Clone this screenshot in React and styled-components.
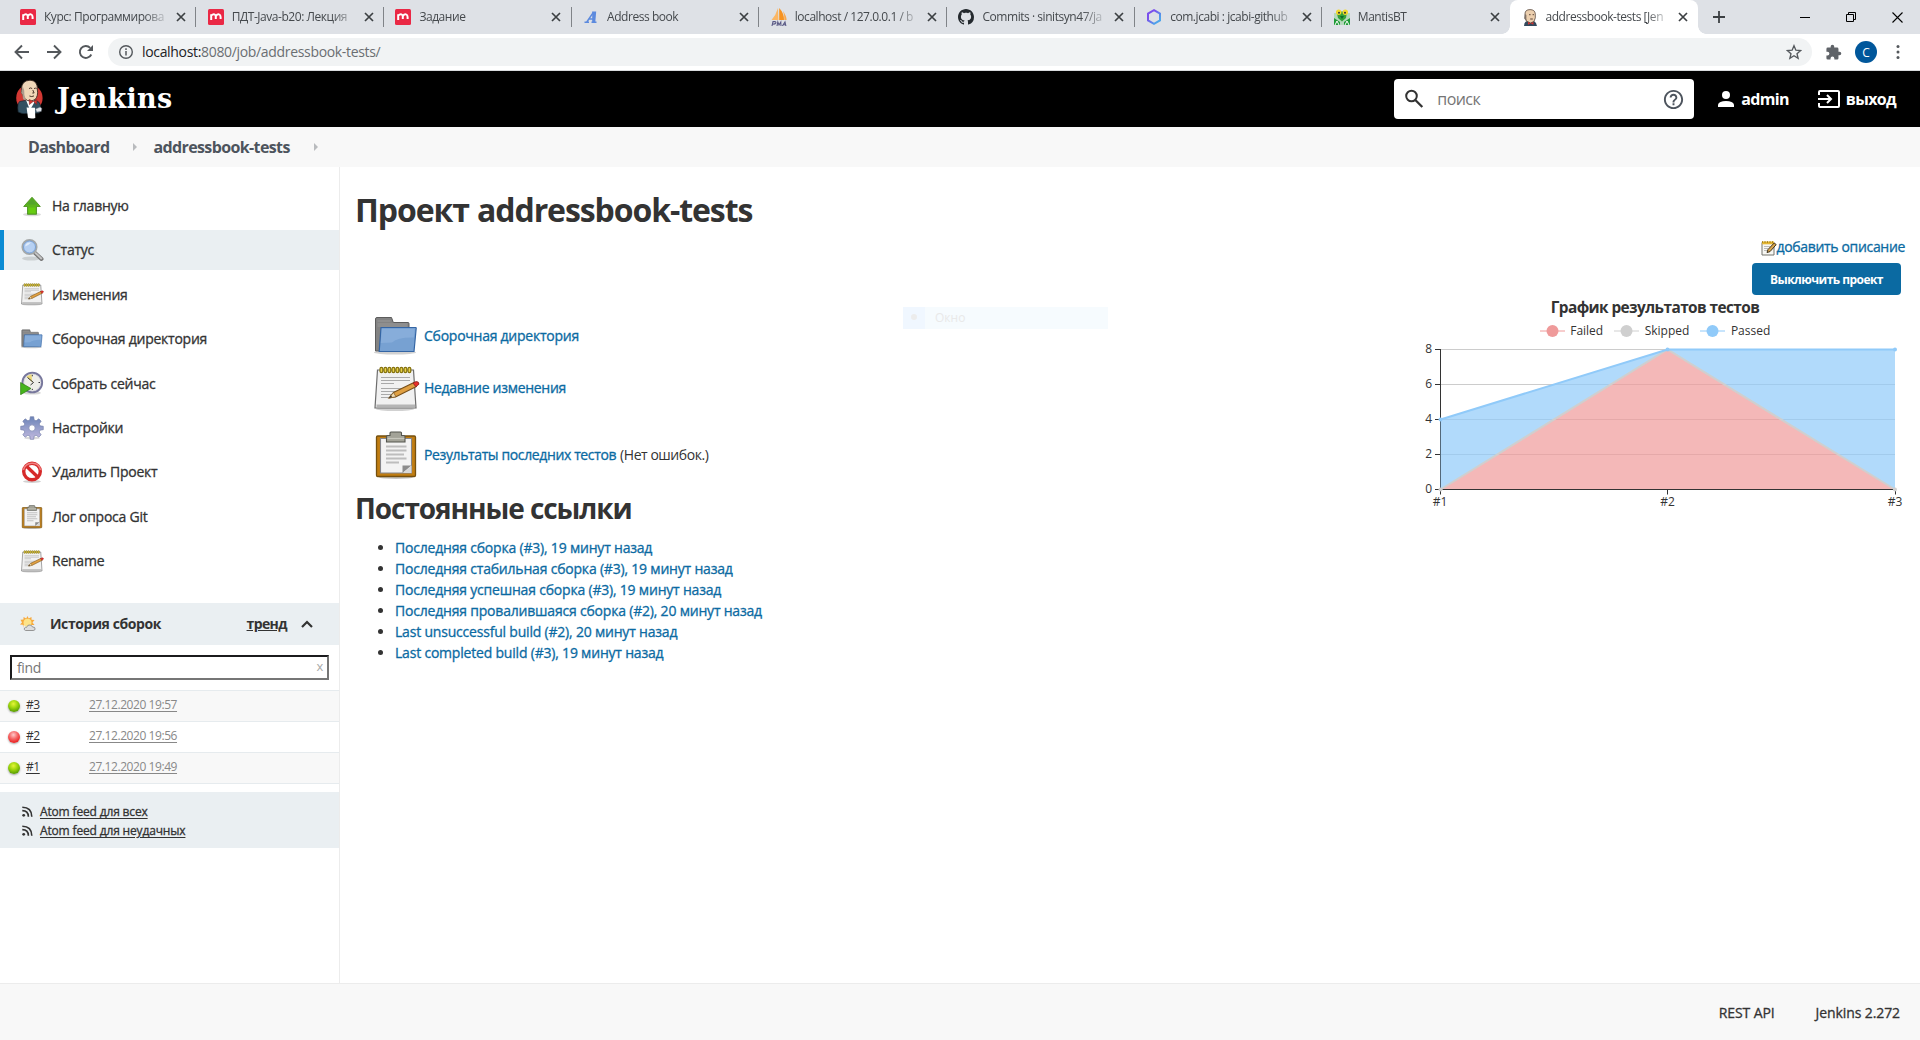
import React from "react";
import styled, { createGlobalStyle, css } from "styled-components";

const sans = '"Open Sans", "Noto Sans", sans-serif';

const medium = css`
  font-weight: 500;
  -webkit-text-stroke: 0.3px currentColor;
`;

const GlobalStyle = createGlobalStyle`
  * { box-sizing: border-box; }
  html, body { margin: 0; padding: 0; background: #fff; }
  body { font-family: ${sans}; font-size: 14px; color: #333; overflow: hidden; }
  svg { display: block; flex: none; }
`;

const Page = styled.div`
  width: 1920px;
  height: 1040px;
  display: flex;
  flex-direction: column;
  overflow: hidden;
`;

/* ---------- browser chrome ---------- */

const TabStrip = styled.div`
  height: 34px;
  flex: none;
  display: flex;
  background: #dee1e6;
  padding-left: 8.5px;
`;

const TabBox = styled.div`
  width: 187.7px;
  flex: none;
  display: flex;
  align-items: center;
  padding-left: 11.5px;
  position: relative;
  font-size: 12px;
  letter-spacing: -0.45px;
  color: #45494d;
  ${(p) =>
    p.$active
      ? css`
          background: #fff;
          border-radius: 8px 8px 0 0;
          &::before, &::after {
            content: "";
            position: absolute;
            bottom: 0;
            width: 8px;
            height: 8px;
          }
          &::before { left: -8px; background: radial-gradient(circle at 0 0, #dee1e6 7.5px, #fff 8px); }
          &::after { right: -8px; background: radial-gradient(circle at 100% 0, #dee1e6 7.5px, #fff 8px); }
        `
      : css`
          &::after {
            content: "";
            position: absolute;
            right: 0;
            top: 7px;
            width: 1px;
            height: 20px;
            background: ${p.$noLine ? "transparent" : "#808388"};
          }
        `}
`;

const TabTitle = styled.div`
  width: 126px;
  margin-left: 8px;
  margin-right: 6px;
  line-height: 18px;
  white-space: nowrap;
  flex: none;
  mask-image: linear-gradient(90deg, #000 100px, transparent 126px);
`;

const WindowButtons = styled.div`
  margin-left: auto;
  display: flex;
  align-items: center;
  height: 34px;
  gap: 36px;
  padding-right: 17px;
`;

const NewTab = styled.div`
  display: flex;
  align-items: center;
  height: 34px;
  margin-left: 14px;
`;

const Toolbar = styled.div`
  height: 37px;
  flex: none;
  display: flex;
  align-items: center;
  padding: 0 13px 0 14px;
  border-bottom: 1px solid #d8dbdd;
`;

const NavButtons = styled.div`
  display: flex;
  gap: 16px;
  width: 94px;
  flex: none;
`;

const Omnibox = styled.div`
  width: 1704px;
  height: 28px;
  flex: none;
  border-radius: 14px;
  background: #f1f3f4;
  display: flex;
  align-items: center;
  padding: 0 10px;
`;

const Url = styled.div`
  margin-left: 8px;
  flex: 1;
  color: #6a6e72;
  letter-spacing: -0.33px;
  line-height: 20px;
  b { font-weight: 400; color: #202124; }
`;

const ToolbarRight = styled.div`
  display: flex;
  align-items: center;
  margin-left: 13px;
  gap: 13px;
`;

const Avatar = styled.div`
  width: 22px;
  height: 22px;
  flex: none;
  border-radius: 50%;
  background: #01579b;
  color: #fff;
  font-size: 12px;
  display: flex;
  align-items: center;
  justify-content: center;
`;

/* ---------- header ---------- */

const Header = styled.header`
  height: 56px;
  flex: none;
  background: #000;
  display: flex;
  align-items: center;
  padding: 0 24px 0 15px;
`;

const Wordmark = styled.div`
  font-family: "DejaVu Serif", Georgia, serif;
  font-weight: 700;
  font-size: 27px;
  line-height: 32px;
  color: #fff;
  margin-left: 14px;
  margin-top: -1px;
  letter-spacing: 0.3px;
`;

const Search = styled.div`
  width: 300px;
  height: 40px;
  margin-left: auto;
  background: #fff;
  border-radius: 4px;
  display: flex;
  align-items: center;
  padding: 0 9px 0 10px;
`;

const Placeholder = styled.div`
  flex: 1;
  margin-left: 13px;
  font-size: 16px;
  letter-spacing: -0.53px;
  color: #757575;
`;

const HeaderLink = styled.a`
  display: flex;
  align-items: center;
  margin-left: ${(p) => p.$gap}px;
  color: #fff;
  font-weight: 700;
  font-size: 16px;
  letter-spacing: -0.66px;
  span { margin-left: ${(p) => p.$inner}px; }
`;

const Crumbs = styled.nav`
  height: 40px;
  flex: none;
  background: #f8f8f8;
  display: flex;
  align-items: center;
  padding-left: 28px;
  font-size: 16px;
  font-weight: 700;
  letter-spacing: -0.62px;
  color: #4d545d;
`;

const CrumbArrow = styled.i`
  width: 0;
  height: 0;
  margin: 0 16px 0 24px;
  border: 4px solid transparent;
  border-left: 4px solid #b9bbbe;
  border-right: 0;
`;

/* ---------- body ---------- */

const Body = styled.div`
  height: 816px;
  flex: none;
  display: flex;
`;

const Side = styled.aside`
  width: 340px;
  flex: none;
  border-right: 1px solid #ececec;
  padding-top: 18.6px;
`;

const Tasks = styled.div`
  display: flex;
  flex-direction: column;
  gap: 4.44px;
`;

const Task = styled.a`
  height: 40px;
  display: flex;
  align-items: center;
  padding-left: 16px;
  border-left: 4px solid ${(p) => (p.$active ? "#0b8bd4" : "transparent")};
  background: ${(p) => (p.$active ? "#eaeff2" : "transparent")};
  ${medium}
  letter-spacing: -0.24px;
  color: #333;
  span { margin-left: 8px; padding-bottom: 0.5px; }
`;

const HistoryHead = styled.div`
  height: 42px;
  margin-top: 22px;
  background: #eaeff2;
  display: flex;
  align-items: center;
  padding: 0 26px 1px 20px;
  font-weight: 700;
  letter-spacing: -0.41px;
`;

const HistoryTitle = styled.div`
  margin-left: 14px;
  flex: 1;
`;

const Trend = styled.a`
  text-decoration: underline;
  letter-spacing: -0.6px;
  margin-right: 14px;
`;

const Find = styled.div`
  margin: 10px 10px 10px;
  height: 25px;
  border: 2px solid;
  border-color: #1b1b1d #767676 #767676 #1b1b1d;
  display: flex;
  align-items: center;
  justify-content: space-between;
  padding: 0 4px 0 5px;
  color: #767676;
  letter-spacing: -0.35px;
  small { font-size: 13px; color: #aaa; margin-top: -3px; }
`;

const Build = styled.div`
  height: 31px;
  border-top: 1px solid #e6ebee;
  background: ${(p) => (p.$odd ? "#f8f8f8" : "#fff")};
  display: flex;
  align-items: center;
  padding: 0 8px 3px;
  font-size: 12px;
  letter-spacing: -0.43px;
`;

const BuildNumber = styled.a`
  width: 63px;
  text-underline-offset: 2px;
`;

const BuildDate = styled.a`
  color: #888;
  text-decoration: underline;
  text-underline-offset: 2px;
`;

const Ball = styled.span`
  width: 12px;
  height: 12px;
  margin: 3px 6px 0 0;
  border-radius: 50%;
  box-shadow: 0 1px 2px rgba(0, 0, 0, 0.35);
  background: ${(p) =>
    p.$red
      ? "radial-gradient(circle at 45% 32%, #ffc9c9 0, #f56a6a 38%, #ec2a2a 70%, #c21a1a 100%)"
      : "radial-gradient(circle at 45% 32%, #e6f53a 0, #9fd60e 38%, #5fa304 72%, #3f7a02 100%)"};
`;

const Feeds = styled.div`
  margin-top: 8px;
  height: 56px;
  background: #eaeff2;
  padding: 10px 0 0 22px;
  font-size: 12px;
  ${medium}
  letter-spacing: -0.16px;
`;

const BuildsEnd = styled.div`
  height: 1px;
  background: #e6ebee;
`;

const Feed = styled.a`
  display: flex;
  align-items: center;
  height: 19px;
  u { margin-left: 7px; text-underline-offset: 2px; }
`;

const Main = styled.main`
  flex: 1;
  display: flex;
  justify-content: space-between;
  position: relative;
  padding: 0 15px 0 15px;
`;

const Content = styled.section`
  width: 560px;
`;

const Title = styled.h1`
  margin: 20px 0 0;
  font-size: 32px;
  line-height: 46px;
  font-weight: 700;
  letter-spacing: -1.08px;
  word-spacing: 1px;
  white-space: nowrap;
`;

const Subtitle = styled.h2`
  margin: 9px 0 0;
  font-size: 28px;
  line-height: 40px;
  font-weight: 700;
  letter-spacing: -1.07px;
`;

const Shortcuts = styled.div`
  padding: 78px 0 0 17px;
  display: flex;
  flex-direction: column;
`;

const Shortcut = styled.div`
  height: ${(p) => p.$h}px;
  margin-top: ${(p) => p.$top || 0}px;
  display: flex;
  align-items: center;
  gap: 4px;
  white-space: nowrap;
  letter-spacing: -0.45px;
  a, span { padding-bottom: 1px; }
`;

const Link = styled.a`
  color: #0b6aa2;
  ${medium}
  letter-spacing: ${(p) => p.$ls || -0.25}px;
`;

const LinkList = styled.ul`
  margin: 9px 0 0;
  padding-left: 40px;
  li { height: 21px; line-height: 21px; white-space: nowrap; }
`;

const SidePanel = styled.section`
  width: 500px;
  display: flex;
  flex-direction: column;
  align-items: flex-end;
  padding-top: 70px;
`;

const AddNote = styled.div`
  display: flex;
  align-items: center;
  height: 21px;
  a { padding-bottom: 2px; }
`;

const Button = styled.button`
  width: 149px;
  height: 32px;
  margin: 5px 4px 0 0;
  border: 0;
  border-radius: 4px;
  background: #0b6aa2;
  color: #fff;
  font: 700 12px ${sans};
  letter-spacing: -0.54px;
`;

const ChartTitle = styled.div`
  width: 500px;
  height: 24px;
  line-height: 26px;
  text-align: center;
  font-size: 15.4px;
  font-weight: 700;
  letter-spacing: -0.58px;
`;

const Legend = styled.div`
  width: 500px;
  height: 23px;
  display: flex;
  justify-content: center;
  align-items: center;
  gap: 11px;
  font-size: 12px;
`;

const LegendItem = styled.div`
  display: flex;
  align-items: center;
  gap: 5.5px;
`;

const ChartText = styled.text`
  font-family: ${sans};
  font-size: 12px;
  fill: #333;
`;

const MenuGhost = styled.div`
  position: absolute;
  left: 563px;
  top: 140px;
  width: 205px;
  height: 22px;
  background: linear-gradient(90deg, #f0f7ff 22px, #f6fbfe 22px);
  display: flex;
  align-items: center;
  padding: 0 0 2px 8px;
  gap: 18px;
  font-size: 12px;
  color: #e9e9e9;
  i { width: 6px; height: 6px; border-radius: 50%; background: #ececec; }
`;

const Footer = styled.footer`
  flex: 1;
  background: #f8f8f8;
  border-top: 1px solid #ececec;
  display: flex;
  align-items: center;
  justify-content: flex-end;
  gap: 41px;
  padding: 0 20px 0 0;
  ${medium}
  letter-spacing: -0.1px;
`;

/* ---------- icons ---------- */

const TabClose = () => (
  <svg width="10" height="10" viewBox="0 0 10 10"><path d="M1 1l8 8M9 1l-8 8" stroke="#3c4043" strokeWidth="1.7" /></svg>
);

const MIcon = () => (
  <svg width="16" height="16" viewBox="0 0 16 16">
    <rect width="16" height="16" rx="1.5" fill="#ea2845" />
    <path d="M3.2 11V5.2M3.2 6.6Q5 5 6.4 5.4Q7.8 5.8 7.8 7.5V10M7.8 7Q9.5 5 11 5.4Q12.6 5.8 12.6 8V10" stroke="#fff" strokeWidth="2" fill="none" />
  </svg>
);

const SlantA = () => (
  <svg width="16" height="16" viewBox="0 0 16 16">
    <path d="M1.500 13.200h4.500M8.500 13.200h5M3.800 13L10.500 3.200M5.800 10h5" stroke="#5c8ade" strokeWidth="1.500" fill="none" />
    <path d="M9.200 2.500h4l-.9 10.500H9.200z" fill="#5c8ade" />
  </svg>
);

const PmaIcon = () => (
  <svg width="16" height="18" viewBox="0 0 16 18">
    <path d="M7 0L7.4 12H0.5Q5 7 7 0z" fill="#fbb765" />
    <path d="M8.2 0Q13 5 13 12H8.2z" fill="#f79320" />
    <path d="M12 3Q15.5 8 15.6 12H13.4Q13.6 7 12 3z" fill="#f9a84b" />
    <path d="M1 18l1-4.4h1.8q1.4.2 1 1.4t-3 1.2M6 18l.8-4 1.2 3 1.8-3 .2 4M11.4 18l2.6-4 .9 4M12.4 16.8h2" stroke="#5a5a86" strokeWidth="1.1" fill="none" />
  </svg>
);

const GithubIcon = () => (
  <svg width="16" height="16" viewBox="0 0 16 16">
    <path fill="#24292e" d="M8 0C3.58 0 0 3.58 0 8c0 3.54 2.29 6.53 5.47 7.59.4.07.55-.17.55-.38 0-.19-.01-.82-.01-1.49-2.01.37-2.53-.49-2.69-.94-.09-.23-.48-.94-.82-1.13-.28-.15-.68-.52-.01-.53.63-.01 1.08.58 1.23.82.72 1.21 1.87.87 2.33.66.07-.52.28-.87.51-1.07-1.78-.2-3.64-.89-3.64-3.95 0-.87.31-1.59.82-2.15-.08-.2-.36-1.02.08-2.12 0 0 .67-.21 2.2.82.64-.18 1.32-.27 2-.27s1.36.09 2 .27c1.53-1.04 2.2-.82 2.2-.82.44 1.1.16 1.92.08 2.12.51.56.82 1.27.82 2.15 0 3.07-1.87 3.75-3.65 3.95.29.25.54.73.54 1.48 0 1.07-.01 1.93-.01 2.2 0 .21.15.46.55.38A8.01 8.01 0 0 0 16 8c0-4.42-3.58-8-8-8z" />
  </svg>
);

const HexIcon = () => (
  <svg width="16" height="16" viewBox="0 0 16 16">
    <defs><linearGradient id="hex" x1="0" y1="0" x2="1" y2="1"><stop offset=".3" stopColor="#7a50ec" /><stop offset=".8" stopColor="#4da4ea" /></linearGradient></defs>
    <path d="M8 1.2l6 3.4v6.8l-6 3.4-6-3.4V4.6z" fill="none" stroke="url(#hex)" strokeWidth="2" />
  </svg>
);

const MantisIcon = () => (
  <svg width="16" height="16" viewBox="0 0 16 16">
    <path d="M0 4h4l3 6h3l3-6h3v12H0z" fill="#8bd08f" opacity=".5" />
    <path d="M2.5 2.5h10.5L12 9l-4 3.5L4 9z" fill="#35a13a" />
    <path d="M0 9l6 4v3H0zM16 9l-6 4v3h6z" fill="#1f9a36" />
    <circle cx="4.7" cy="3.3" r="2.7" fill="#f3d92c" /><circle cx="11.3" cy="3.3" r="2.700" fill="#f3d92c" />
    <circle cx="5" cy="3.8" r="1" fill="#333" /><circle cx="11" cy="3.8" r="1" fill="#333" />
    <path d="M6 7h4l-2 3z" fill="#0d6d2b" /><path d="M1 16l2-4 2 4M11 16l2-4 2 4" stroke="#fff" fill="none" />
  </svg>
);

const ButlerFace = () => (
  <svg width="16" height="17" viewBox="0 0 16 17">
    <path d="M2 17q0-4 3-5h7q3 2 3 5z" fill="#33495c" />
    <path d="M3 5Q3 .6 8 .6T13.3 5Q14 9 12 12.4L8.5 14 4.4 12Q2.6 9 3 5z" fill="#eccfae" stroke="#5a4a40" strokeWidth=".8" />
    <path d="M3 5l-.8 4.4L4.4 12V6z" fill="#7f7166" />
    <path d="M7 5.7h1.6M10.6 5.7H12M8.2 10h2.6" stroke="#4d372c" strokeWidth=".9" />
    <path d="M6 13l2.6 1.3L6 15.7zM11.4 13l-2.8 1.3 2.8 1.4z" fill="#d8322d" />
  </svg>
);

const favicons = { m: MIcon, a: SlantA, pma: PmaIcon, github: GithubIcon, hex: HexIcon, mantis: MantisIcon, butler: ButlerFace };

const Butler = () => (
  <svg width="28" height="40" viewBox="0 0 28 40">
    <ellipse cx="14.4" cy="19" rx="13.2" ry="13.4" fill="#d33833" />
    <path d="M4.6 22.5Q2 25 3.2 33q4 2 7 1.6l14-.6q3-7-.5-11l-5.5-3z" fill="#335061" stroke="#1b2a33" strokeWidth=".7" />
    <path d="M11 21l4 10 4.6-8-1-3z" fill="#fff" />
    <path d="M6.6 11Q6 1.6 15 1.2 22.8 1.4 22.4 11q1 6-2.4 9.6-3.6 2.6-7.6.9Q8 19.600 7.600 15.400 5.800 14 6.600 11z" fill="#f0d6b7" stroke="#3c2b24" strokeWidth=".9" />
    <path d="M6.600 11q-1 3 1 4.600L8 20q2 1.400 3 1.200L9.400 16l-.2-4.500L8 8z" fill="#ad9b8c" />
    <path d="M14 9.600q1.600-1.400 3.200 0M19 9.600q1.400-1 2.600 0M17.800 11l1.300 3h-1.800M14.400 17q2.400 1.200 4.600-.1" stroke="#4d372c" fill="none" strokeWidth="1" />
    <path d="M14.200 20.400l4 2-3.800 3.200zM22 20.600l-3.600 1.800 3.200 3z" fill="#d33833" stroke="#7c1b18" strokeWidth=".5" />
    <path d="M11.600 28.500l8.400.2.300 10.200q-4 1.200-7.300-.2z" fill="#fff" />
    <path d="M20.500 30l4.600-2 1.800 1.500-.7 3-4.500.600z" fill="#dfe3e8" stroke="#5c6773" strokeWidth=".5" />
  </svg>
);

const ArrowUp = () => (
  <svg width="24" height="24" viewBox="0 0 24 24">
    <ellipse cx="12" cy="20.500" rx="9" ry="1.800" fill="#000" opacity=".14" />
    <path d="M12 3.200L20.300 12.500H16.500V20.300H7.500V12.500H3.700z" fill="#5cb41d" stroke="#418a14" strokeWidth=".8" />
    <path d="M12 4.500L7 10.500h10z" fill="#4d9a36" opacity=".6" />
    <path d="M8.500 13.500h7v5.800h-7z" fill="#66cc10" />
  </svg>
);

const Magnifier = () => (
  <svg width="24" height="24" viewBox="0 0 24 24">
    <ellipse cx="11" cy="20.500" rx="9" ry="2" fill="#000" opacity=".13" />
    <path d="M14.500 14.500l7 6.500" stroke="#777" strokeWidth="4" strokeLinecap="round" />
    <path d="M15.500 15l5.800 5.400" stroke="#c4c4c4" strokeWidth="2" strokeLinecap="round" />
    <circle cx="9.500" cy="9" r="7.200" fill="#b6d0f2" stroke="#a5a8a8" strokeWidth="1.700" />
    <circle cx="9.500" cy="9" r="6" fill="none" stroke="#5e8cc8" strokeWidth=".7" />
    <path d="M5 8.500Q6 4 11 4.600 8 8 5 8.500z" fill="#dfebfb" />
  </svg>
);

const Notepad = ({ size = 24 }) => (
  <svg width={size} height={size} viewBox="0 0 48 48">
    <ellipse cx="23" cy="45" rx="19" ry="2" fill="#000" opacity=".18" />
    <path d="M5.500 6h36L44 44H3z" fill="#f1f1f1" stroke="#6d6d6d" strokeWidth="1.200" />
    <path d="M4.500 40.500h38.500v2.500h-38.500z" fill="#b5b5b5" />
    <path d="M9 13.500h29M9 16.500h29M9 19.500h13M9 24.500h21M9 27.500h17M9 30.500h14M9 33.500h11" stroke="#a9a9a9" strokeWidth="1.100" />
    <g fill="#e8d24a" stroke="#85720d" strokeWidth="1.200">
      {[8, 12, 16, 20, 24, 28, 32, 36].map((x) => <rect key={x} x={x} y="3.300" width="2.800" height="5.400" rx="1.400" />)}
    </g>
    <path d="M17 34l4.500-5.500L42 18.500l2.400 4L24 32.800z" fill="#e0a042" stroke="#78501a" strokeWidth="1.100" />
    <path d="M17 34l4.500-5.500 2.500 4.300z" fill="#f1ddb4" stroke="#78501a" strokeWidth=".7" />
    <path d="M17 34l2-2.400 1 1.400z" fill="#222" />
    <path d="M41 19l3-1.400q3-.3 3 2.600l-3.200 2.600z" fill="#e8302c" stroke="#8a2420" strokeWidth=".8" />
  </svg>
);

const Folder = ({ size = 24 }) => (
  <svg width={size} height={size} viewBox="0 0 48 48">
    <ellipse cx="23" cy="40.500" rx="21" ry="2" fill="#000" opacity=".18" />
    <path d="M3.500 39V7q0-1.500 1.500-1.500h14.500l1.800 5H36q1 0 1 1V38z" fill="#838383" stroke="#5c5c5c" />
    <path d="M5.500 9h13M5.500 12h30M5.500 14h30" stroke="#a5a5a5" strokeWidth=".7" />
    <path d="M9 15.500h34.500q.8 0 .7.800L42 39.500H7.200z" fill="#77a1d2" stroke="#3465a4" strokeWidth="1.200" />
    <path d="M9.800 17h32.800l-.8 8.500Q26 25 20 30.500L8.800 31z" fill="#91b4de" opacity=".65" />
  </svg>
);

const ClockPlay = () => (
  <svg width="24" height="24" viewBox="0 0 24 24">
    <ellipse cx="12" cy="22" rx="9" ry="1.600" fill="#000" opacity=".16" />
    <circle cx="12.300" cy="11.500" r="9.800" fill="#eeeee9" stroke="#77779c" strokeWidth="2" />
    <circle cx="12.300" cy="11.500" r="8.500" fill="none" stroke="#c9c9d8" strokeWidth=".6" />
    <path d="M12.300 11.500L6.500 5.500 11.500 3z" fill="#ecd97c" />
    <path d="M7.500 6.500L13.500 11.500l-3 2.500M12.300 3.800v1.500M20 11.500h-1.500M12.300 19v-1.200" stroke="#333" fill="none" strokeWidth="1" />
    <path d="M.6 11.500L11 17.500.6 23.700z" fill="#45b41c" stroke="#2f7c12" strokeWidth=".7" />
  </svg>
);

const Gear = () => (
  <svg width="24" height="24" viewBox="0 0 24 24">
    <defs><linearGradient id="gear" x1="0" y1="0" x2="0" y2="1"><stop offset="0" stopColor="#6c84b8" /><stop offset="1" stopColor="#c0b9de" /></linearGradient></defs>
    <ellipse cx="12" cy="22" rx="8" ry="1.500" fill="#000" opacity=".14" />
    <path fill="url(#gear)" stroke="#6e7aa6" strokeWidth=".6" d="M10.300.7h3.400l.5 3.300 1.900.8 2.700-2 2.400 2.400-2 2.700.8 1.900 3.300.5v3.400l-3.300.5-.8 1.900 2 2.700-2.400 2.400-2.700-2-1.900.8-.5 3.300h-3.400l-.5-3.300-1.900-.8-2.700 2-2.400-2.400 2-2.700-.8-1.900-3.300-.5v-3.400l3.300-.5.8-1.900-2-2.700 2.400-2.400 2.700 2 1.900-.8z" />
    <circle cx="12" cy="12" r="3.200" fill="#fff" stroke="#7d88b3" strokeWidth=".8" />
  </svg>
);

const Forbidden = () => (
  <svg width="24" height="24" viewBox="0 0 24 24">
    <ellipse cx="12" cy="21.500" rx="9" ry="1.500" fill="#000" opacity=".18" />
    <circle cx="12" cy="11.500" r="8.300" fill="#fff" stroke="#d62a2a" strokeWidth="3.400" />
    <path d="M6 5.800l12 11.500" stroke="#d62a2a" strokeWidth="3.300" />
    <path d="M3.500 10Q5 3.500 12 3.200T20.500 10" stroke="#f08080" fill="none" strokeWidth="1.400" />
  </svg>
);

const Clipboard = ({ size = 24 }) => (
  <svg width={size} height={size} viewBox="0 0 48 48">
    <ellipse cx="24" cy="46.300" rx="17" ry="1.700" fill="#000" opacity=".22" />
    <rect x="4.500" y="5" width="39" height="40.500" rx="1.200" fill="#c17d11" stroke="#75500f" strokeWidth="1.300" />
    <path d="M8.500 7.500h31v34.500h-31z" fill="#f3f3f3" stroke="#85858a" strokeWidth="1.100" />
    <path d="M14 15.500h20.500M14 19.500h20.500M14 23.500h18M14 27.500h20.500M14 31.500h13" stroke="#bdbdbd" strokeWidth="1.900" />
    <path d="M39.500 34.500h-9v7.500z" fill="#8c8c8c" /><path d="M39.500 34.500L31 42h8.500z" fill="#d8d8d8" />
    <path d="M14.500 11V5.500q0-1 1-1H18V2q0-1 1-1h9.500q1 0 1 1v2.500H32q1 0 1 1V11z" fill="#a3a398" stroke="#55564f" strokeWidth="1.100" />
    <path d="M15.500 7.500h16.800" stroke="#c7c7bd" strokeWidth="1.200" />
  </svg>
);

const Weather = () => (
  <svg width="16" height="16" viewBox="0 0 16 16">
    <path d="M7.500 0l1.200 2.400L11.500 1l0 2.700 3 .3-2 2.500 2 2.500H3.500l-.3 3-.4-3.200L0 8.500l2-2L.5 3.800l3-.2V1l2.700 1.400z" fill="#f7a93c" />
    <circle cx="7.500" cy="6.800" r="4" fill="#fde388" />
    <path d="M5.500 14.500q-2-.6-1-2.500.8-1 2-.6Q7.500 8.500 10 9q2 .3 2.500 2 2.800-.2 2.600 2-.2 1.500-2 1.500z" fill="#ddd" stroke="#8b8b8b" strokeWidth=".9" />
  </svg>
);

const Rss = () => (
  <svg width="11" height="11" viewBox="0 0 11 11">
    <circle cx="1.700" cy="9.300" r="1.400" fill="#333" />
    <path d="M.3 4.600Q6.300 4.600 6.400 10.700M.3 1.300Q9.700 1.400 9.800 10.700" stroke="#333" strokeWidth="1.600" fill="none" />
  </svg>
);

const EditNote = () => (
  <svg width="16" height="16" viewBox="0 0 16 16">
    <path d="M1 2.500h12V15H1z" fill="#f7f7f3" stroke="#72726c" />
    <path d="M1 1.500h12v2.800H1z" fill="#e3b633" /><path d="M1.500 1v2M4 1v2M6.500 1v2M9 1v2M11.500 1v2" stroke="#a27a12" strokeWidth=".8" />
    <path d="M3 6.500h6M3 8.500h4M3 10.500h3" stroke="#aaa" strokeWidth=".8" />
    <path d="M6 12.500l1-3L13.200 3l2 1.600L9 11.600z" fill="#d9a64e" stroke="#3f3018" strokeWidth="1" />
  </svg>
);

/* ---------- data ---------- */

const tabs = [
  ["m", "Курс: Программирова"],
  ["m", "ПДТ-Java-b20: Лекция"],
  ["m", "Задание"],
  ["a", "Address book"],
  ["pma", "localhost / 127.0.0.1 / b"],
  ["github", "Commits · sinitsyn47/ja"],
  ["hex", "com.jcabi : jcabi-github"],
  ["mantis", "MantisBT"],
  ["butler", "addressbook-tests [Jen"],
];

const tasks = [
  [ArrowUp, "На главную"],
  [Magnifier, "Статус"],
  [Notepad, "Изменения"],
  [Folder, "Сборочная директория"],
  [ClockPlay, "Собрать сейчас"],
  [Gear, "Настройки"],
  [Forbidden, "Удалить Проект"],
  [Clipboard, "Лог опроса Git"],
  [Notepad, "Rename"],
];

const builds = [
  ["#3", "27.12.2020 19:57"],
  ["#2", "27.12.2020 19:56"],
  ["#1", "27.12.2020 19:49"],
];

const permalinks = [
  "Последняя сборка (#3), 19 минут назад",
  "Последняя стабильная сборка (#3), 19 минут назад",
  "Последняя успешная сборка (#3), 19 минут назад",
  "Последняя провалившаяся сборка (#2), 20 минут назад",
  "Last unsuccessful build (#2), 20 минут назад",
  "Last completed build (#3), 19 минут назад",
];

const series = [["Failed", "#ef9a9a"], ["Skipped", "#cfcfcf"], ["Passed", "#90caf9"]];

const Chart = () => (
  <svg width="500" height="176" viewBox="0 -2 500 176" overflow="visible">
    {[0, 2, 4, 6, 8].map((v) => {
      const y = 145.5 - v * 17.5;
      return (
        <g key={v}>
          <path d={`M36 ${y}H490`} stroke="#ccc" />
          <path d={`M30 ${y}h5`} stroke="#333" />
          <ChartText x="27" y={y + 3} textAnchor="end">{v}</ChartText>
        </g>
      );
    })}
    <path d="M35.500 5v141" stroke="#333" />
    <path d="M35.500 145.500L262.500 5.500 490 145.500z" fill="#ef9a9a" fillOpacity=".7" />
    <path d="M35.500 145.500V75.500L262.500 5.500H490V145.500L262.500 5.500z" fill="#90caf9" fillOpacity=".7" />
    <path d="M30 145.500H490.500M35.500 145.500v5M262.500 145.500v5M490.500 145.500v5" stroke="#333" />
    <path d="M35.500 145.500L262.500 5.500 490 145.500" stroke="#cfcfcf" strokeWidth="2" fill="none" />
    <path d="M35.500 75.500L262.500 5.500H490" stroke="#90caf9" strokeWidth="2" fill="none" />
    <g fill="#cfcfcf"><circle cx="35.500" cy="145.500" r="2" /><circle cx="490" cy="145.500" r="2" /></g>
    <g fill="#90caf9"><circle cx="35.500" cy="75.500" r="2" /><circle cx="262.500" cy="5.500" r="2" /><circle cx="490" cy="5.500" r="2" /></g>
    {["#1", "#2", "#3"].map((t, i) => <ChartText key={t} x={[35, 262.500, 490][i]} y="161.500" textAnchor="middle">{t}</ChartText>)}
  </svg>
);

export default function App() {
  return (
    <Page>
      <GlobalStyle />
      <TabStrip>
        {tabs.map(([icon, title], i) => {
          const Icon = favicons[icon];
          return (
            <TabBox key={title} $active={i === 8} $noLine={i === 7}>
              <Icon />
              <TabTitle>{title}</TabTitle>
              <TabClose />
            </TabBox>
          );
        })}
        <NewTab>
          <svg width="14" height="14" viewBox="0 0 14 14"><path d="M7 1v12M1 7h12" stroke="#3c4043" strokeWidth="1.800" /></svg>
        </NewTab>
        <WindowButtons>
          <svg width="10" height="10" viewBox="0 0 10 10"><path d="M0 5.500h10" stroke="#000" /></svg>
          <svg width="10" height="10" viewBox="0 0 10 10"><path d="M.5 2.500h7v7h-7zM2.500 2.500v-2h7v7h-2" stroke="#000" fill="none" /></svg>
          <svg width="11" height="11" viewBox="0 0 11 11"><path d="M.5.5l10 10M10.500.5l-10 10" stroke="#000" strokeWidth="1.100" /></svg>
        </WindowButtons>
      </TabStrip>
      <Toolbar>
        <NavButtons>
          <svg width="16" height="16" viewBox="0 0 16 16"><path d="M15 8H2M8 1.500L1.500 8 8 14.500" stroke="#54585c" strokeWidth="1.900" fill="none" /></svg>
          <svg width="16" height="16" viewBox="0 0 16 16"><path d="M1 8h13M8 1.500L14.500 8 8 14.500" stroke="#54585c" strokeWidth="1.900" fill="none" /></svg>
          <svg width="16" height="16" viewBox="0 0 16 16"><path d="M13.300 10.500A6 6 0 1 1 12.200 3.800" stroke="#54585c" strokeWidth="1.900" fill="none" /><path d="M15 1v6H9z" fill="#54585c" /></svg>
        </NavButtons>
        <Omnibox>
          <svg width="16" height="16" viewBox="0 0 16 16"><circle cx="8" cy="8" r="6.300" stroke="#54585c" strokeWidth="1.400" fill="none" /><path d="M8 7v4.500M8 4.300v1.600" stroke="#54585c" strokeWidth="1.500" /></svg>
          <Url><b>localhost:</b>8080/job/addressbook-tests/</Url>
          <svg width="16" height="16" viewBox="0 0 24 24"><path d="M12 2.500l2.800 6.700 7.200.6-5.500 4.700 1.700 7L12 17.700l-6.200 3.800 1.700-7L2 9.800l7.200-.6z" fill="none" stroke="#54585c" strokeWidth="2" /></svg>
        </Omnibox>
        <ToolbarRight>
          <svg width="17" height="17" viewBox="0 0 24 24"><path fill="#5f6368" d="M20.500 11H19V7a2 2 0 0 0-2-2h-4V3.500a2.500 2.500 0 0 0-5 0V5H4a2 2 0 0 0-2 2v3.800h1.500a2.700 2.700 0 0 1 0 5.400H2V20a2 2 0 0 0 2 2h3.800v-1.500a2.700 2.700 0 0 1 5.400 0V22H17a2 2 0 0 0 2-2v-4h1.500a2.500 2.500 0 0 0 0-5z" /></svg>
          <Avatar>С</Avatar>
          <svg width="16" height="16" viewBox="0 0 16 16" fill="#54585c"><circle cx="8" cy="2.500" r="1.500" /><circle cx="8" cy="8" r="1.500" /><circle cx="8" cy="13.500" r="1.500" /></svg>
        </ToolbarRight>
      </Toolbar>
      <Header>
        <Butler />
        <Wordmark>Jenkins</Wordmark>
        <Search>
          <svg width="20" height="20" viewBox="0 0 20 20"><circle cx="7.500" cy="7" r="5.300" stroke="#333" strokeWidth="2" fill="none" /><path d="M11.300 11l7 7" stroke="#333" strokeWidth="2.300" /></svg>
          <Placeholder>поиск</Placeholder>
          <svg width="23" height="23" viewBox="0 0 24 24"><path fill="#4d545d" d="M11 18h2v-2h-2v2zm1-16C6.480 2 2 6.480 2 12s4.480 10 10 10 10-4.480 10-10S17.520 2 12 2zm0 18c-4.410 0-8-3.590-8-8s3.590-8 8-8 8 3.590 8 8-3.590 8-8 8zm0-14c-2.210 0-4 1.790-4 4h2c0-1.100.9-2 2-2s2 .9 2 2c0 2-3 1.750-3 5h2c0-2.250 3-2.500 3-5 0-2.210-1.790-4-4-4z" /></svg>
        </Search>
        <HeaderLink $gap={24} $inner={7}>
          <svg width="16" height="16" viewBox="0 0 16 16" fill="#fff"><circle cx="8" cy="4" r="4" /><path d="M0 16v-2.500Q1 10 8 10t8 3.500V16z" /></svg>
          <span>admin</span>
        </HeaderLink>
        <HeaderLink $gap={29} $inner={6}>
          <svg width="22" height="18" viewBox="0 0 22 18"><path d="M1 5V2q0-1 1-1h18q1 0 1 1v14q0 1-1 1H2q-1 0-1-1v-3M0 9h12M9 5l4 4-4 4" stroke="#fff" strokeWidth="2" fill="none" /></svg>
          <span>выход</span>
        </HeaderLink>
      </Header>
      <Crumbs>
        Dashboard<CrumbArrow />addressbook-tests<CrumbArrow />
      </Crumbs>
      <Body>
        <Side>
          <Tasks>
            {tasks.map(([Icon, label], i) => (
              <Task key={label} $active={i === 1}><Icon /><span>{label}</span></Task>
            ))}
          </Tasks>
          <HistoryHead>
            <Weather />
            <HistoryTitle>История сборок</HistoryTitle>
            <Trend>тренд</Trend>
            <svg width="12" height="8" viewBox="0 0 12 8"><path d="M1 7l5-5 5 5" stroke="#333" strokeWidth="2.200" fill="none" /></svg>
          </HistoryHead>
          <Find>find<small>x</small></Find>
          {builds.map(([id, date], i) => (
            <Build key={id} $odd={i !== 1}>
              <Ball $red={i === 1} />
              <BuildNumber><u>{id}</u></BuildNumber>
              <BuildDate>{date}</BuildDate>
            </Build>
          ))}
          <BuildsEnd />
          <Feeds>
            <Feed><Rss /><u>Atom feed для всех</u></Feed>
            <Feed><Rss /><u>Atom feed для неудачных</u></Feed>
          </Feeds>
        </Side>
        <Main>
          <Content>
            <Title>Проект addressbook-tests</Title>
            <Shortcuts>
              <Shortcut $h={50}><Folder size={48} /><Link>Сборочная директория</Link></Shortcut>
              <Shortcut $h={53}><Notepad size={48} /><Link $ls={-0.3}>Недавние изменения</Link></Shortcut>
              <Shortcut $h={48} $top={17}><Clipboard size={48} /><Link $ls={-0.38}>Результаты последних тестов</Link><span>(Нет ошибок.)</span></Shortcut>
            </Shortcuts>
            <Subtitle>Постоянные ссылки</Subtitle>
            <LinkList>
              {permalinks.map((t) => <li key={t}><Link $ls={-0.2}>{t}</Link></li>)}
            </LinkList>
          </Content>
          <MenuGhost><i />Окно</MenuGhost>
          <SidePanel>
            <AddNote><EditNote /><Link $ls={-0.33}>добавить описание</Link></AddNote>
            <Button>Выключить проект</Button>
            <ChartTitle>График результатов тестов</ChartTitle>
            <Legend>
              {series.map(([name, color]) => (
                <LegendItem key={name}>
                  <svg width="25" height="12" viewBox="0 0 25 12"><path d="M0 6h25" stroke={color} /><circle cx="12.500" cy="6" r="6" fill={color} /></svg>
                  {name}
                </LegendItem>
              ))}
            </Legend>
            <Chart />
          </SidePanel>
        </Main>
      </Body>
      <Footer><span>REST API</span><span>Jenkins 2.272</span></Footer>
    </Page>
  );
}
